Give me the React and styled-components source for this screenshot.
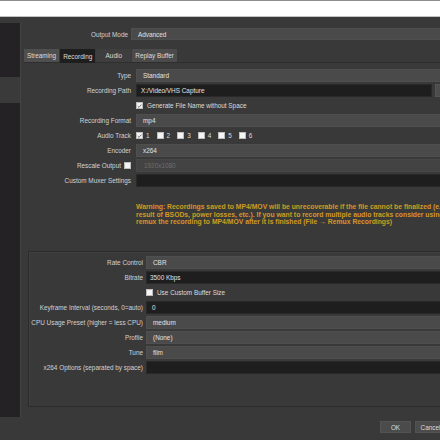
import React from "react";
import styled, { createGlobalStyle } from "styled-components";

const Global = createGlobalStyle`
  html, body { margin: 0; padding: 0; background: #3a393a; }
  body { font-family: "Liberation Sans", Arial, sans-serif; }
  * { box-sizing: border-box; }
`;

const Viewport = styled.div`
  width: 440px;
  height: 440px;
  overflow: hidden;
  background: #3a393a;
  font-size: 6.4px;
  color: #d4d4d4;
`;

const Window = styled.div`
  width: 520px;
  height: 440px;
  display: flex;
  flex-direction: column;
`;

const TitleStrip = styled.div`
  flex: none;
  height: 17px;
  background: #ffffff;
  border-top: 1px solid #8e8e8e;
  border-bottom: 1px solid #c2c2c2;
`;

const Body = styled.div`
  flex: none;
  height: 400px;
  display: flex;
`;

const Sidebar = styled.div`
  flex: none;
  width: 21px;
  padding-top: 6px;
  display: flex;
`;

const List = styled.div`
  flex: 1;
  display: flex;
  flex-direction: column;
  background: #242224;
  border-right: 1px solid #454445;
`;

const ListItem = styled.div`
  flex: none;
  height: ${(p) => (p.$selected ? 26 : 27)}px;
  background: ${(p) => (p.$selected ? "#3b3a3b" : "transparent")};
`;

const Main = styled.div`
  flex: 1;
  min-width: 0;
  padding: 11px 25px 0 3px;
  display: flex;
  flex-direction: column;
`;

const TopRow = styled.div`
  display: grid;
  grid-template-columns: 104px 1fr;
  column-gap: 3px;
  height: 12px;
  align-items: center;
`;

const Label = styled.div`
  text-align: right;
  white-space: nowrap;
  color: #d2d2d2;
  display: flex;
  justify-content: flex-end;
  align-items: center;
  gap: 3px;
`;

const Combo = styled.div`
  height: ${(p) => p.$h || 13}px;
  display: flex;
  align-items: center;
  padding-left: ${(p) => (p.$pad ? p.$pad : 6)}px;
  background: ${(p) => (p.$disabled ? "#434343" : "#4a4a4a")};
  border: 1px solid ${(p) => (p.$disabled ? "#474747" : "#4f4f4f")};
  color: ${(p) => (p.$disabled ? "#6e6e6e" : "#e2e2e2")};
  white-space: nowrap;
`;

const Input = styled.div`
  flex: 1;
  height: 13px;
  display: flex;
  align-items: center;
  padding-left: ${(p) => p.$pad || 4}px;
  background: #1f1e1f;
  border: 1px solid #2a292a;
  color: #e2e2e2;
  white-space: nowrap;
`;

const TabBar = styled.div`
  margin-top: 9px;
  height: 13px;
  display: flex;
  gap: 1px;
  position: relative;
  z-index: 1;
`;

const Tab = styled.div`
  min-width: 35px;
  padding: 0 3px;
  height: ${(p) => (p.$active ? 14 : 13)}px;
  display: flex;
  align-items: center;
  justify-content: center;
  white-space: nowrap;
  background: ${(p) => p.$bg};
  color: #dcdcdc;
`;

const Pane = styled.div`
  border-top: 1px solid #2f2e2f;
  padding-top: 6px;
  display: flex;
  flex-direction: column;
`;

const Form = styled.div`
  display: grid;
  grid-template-columns: ${(p) => p.$label}px 1fr;
  column-gap: ${(p) => p.$gap}px;
  row-gap: 2px;
  grid-auto-rows: 13px;
  align-items: center;
`;

const FieldRow = styled.div`
  display: flex;
  align-items: center;
  gap: ${(p) => p.$gap ?? 3}px;
  height: 13px;
  white-space: nowrap;
`;

const Box = styled.span`
  flex: none;
  width: 7px;
  height: 7px;
  background: #f4f4f4;
  border: 1px solid #bdbdbd;
  display: inline-flex;
  align-items: center;
  justify-content: center;
`;

const CheckItem = styled.span`
  display: inline-flex;
  align-items: center;
  gap: ${(p) => p.$gap ?? 3}px;
  color: #dcdcdc;
`;

const Browse = styled.div`
  flex: none;
  width: 60px;
  height: 13px;
  background: #4d4d4d;
  border: 1px solid #555;
`;

const Warning = styled.div`
  margin-top: 16px;
  padding-left: 112px;
  color: #d29a22;
  font-weight: bold;
  font-size: 6.8px;
  line-height: 7.6px;
`;

const WarnLine = styled.div`
  white-space: nowrap;
`;

const Group = styled.div`
  margin: 25px 0 0 4px;
  border: 1px solid #2c2b2c;
  box-shadow: inset 1px 1px 0 #424142;
  padding: 4px 0 32px 0;
`;

const Footer = styled.div`
  flex: none;
  height: 23px;
  padding: 4px 39px 0 0;
  display: flex;
  justify-content: flex-end;
  gap: 4px;
`;

const Button = styled.div`
  width: 31px;
  height: 12px;
  display: flex;
  align-items: center;
  justify-content: center;
  background: #4b4b4b;
  border: 1px solid #535353;
  color: #dcdcdc;
`;

const Check = ({ checked }) => (
  <Box>
    {checked && (
      <svg width="6" height="6" viewBox="0 0 6 6">
        <path d="M0.8 3.1 L2.4 4.7 L5.3 1.2" fill="none" stroke="#6a6a6a" strokeWidth="1.1" />
      </svg>
    )}
  </Box>
);

export default function App() {
  return (
    <>
      <Global />
      <Viewport>
        <Window>
          <TitleStrip />
          <Body>
            <Sidebar>
              <List>
                <ListItem />
                <ListItem />
                <ListItem $selected />
              </List>
            </Sidebar>
            <Main>
              <TopRow>
                <Label>Output Mode</Label>
                <Combo $h={12}>Advanced</Combo>
              </TopRow>
              <TabBar>
                <Tab $bg="#4f4f4f">Streaming</Tab>
                <Tab $bg="#1f1e1f" $active>Recording</Tab>
                <Tab $bg="#3f3e3f">Audio</Tab>
                <Tab $bg="#4b4b4b">Replay Buffer</Tab>
              </TabBar>
              <Pane>
                <Form $label={107} $gap={5}>
                  <Label>Type</Label>
                  <Combo>Standard</Combo>
                  <Label>Recording Path</Label>
                  <FieldRow>
                    <Input>X:/Video/VHS Capture</Input>
                    <Browse />
                  </FieldRow>
                  <div />
                  <FieldRow>
                    <CheckItem $gap={4}>
                      <Check checked />
                      Generate File Name without Space
                    </CheckItem>
                  </FieldRow>
                  <Label>Recording Format</Label>
                  <Combo>mp4</Combo>
                  <Label>Audio Track</Label>
                  <FieldRow $gap={7}>
                    {[1, 2, 3, 4, 5, 6].map((n) => (
                      <CheckItem key={n}>
                        <Check checked={n === 1} />
                        {n}
                      </CheckItem>
                    ))}
                  </FieldRow>
                  <Label>Encoder</Label>
                  <Combo>x264</Combo>
                  <Label>
                    Rescale Output
                    <Check />
                  </Label>
                  <Combo $disabled $pad={7}>1920x1080</Combo>
                  <Label>Custom Muxer Settings</Label>
                  <FieldRow>
                    <Input />
                  </FieldRow>
                </Form>
                <Warning>
                  <WarnLine>
                    Warning: Recordings saved to MP4/MOV will be unrecoverable if the file cannot be finalized (e.g. as a
                  </WarnLine>
                  <WarnLine>
                    result of BSODs, power losses, etc.). If you want to record multiple audio tracks consider using MKV and
                  </WarnLine>
                  <WarnLine>
                    remux the recording to MP4/MOV after it is finished (File → Remux Recordings)
                  </WarnLine>
                </Warning>
                <Group>
                  <Form $label={114} $gap={3}>
                    <Label>Rate Control</Label>
                    <Combo>CBR</Combo>
                    <Label>Bitrate</Label>
                    <FieldRow>
                      <Input $pad={3}>3500 Kbps</Input>
                    </FieldRow>
                    <div />
                    <FieldRow>
                      <CheckItem $gap={4}>
                        <Check />
                        Use Custom Buffer Size
                      </CheckItem>
                    </FieldRow>
                    <Label>Keyframe Interval (seconds, 0=auto)</Label>
                    <FieldRow>
                      <Input $pad={5}>0</Input>
                    </FieldRow>
                    <Label>CPU Usage Preset (higher = less CPU)</Label>
                    <Combo>medium</Combo>
                    <Label>Profile</Label>
                    <Combo>(None)</Combo>
                    <Label>Tune</Label>
                    <Combo>film</Combo>
                    <Label>x264 Options (separated by space)</Label>
                    <FieldRow>
                      <Input />
                    </FieldRow>
                  </Form>
                </Group>
              </Pane>
            </Main>
          </Body>
          <Footer>
            <Button>OK</Button>
            <Button>Cancel</Button>
            <Button>Apply</Button>
          </Footer>
        </Window>
      </Viewport>
    </>
  );
}
